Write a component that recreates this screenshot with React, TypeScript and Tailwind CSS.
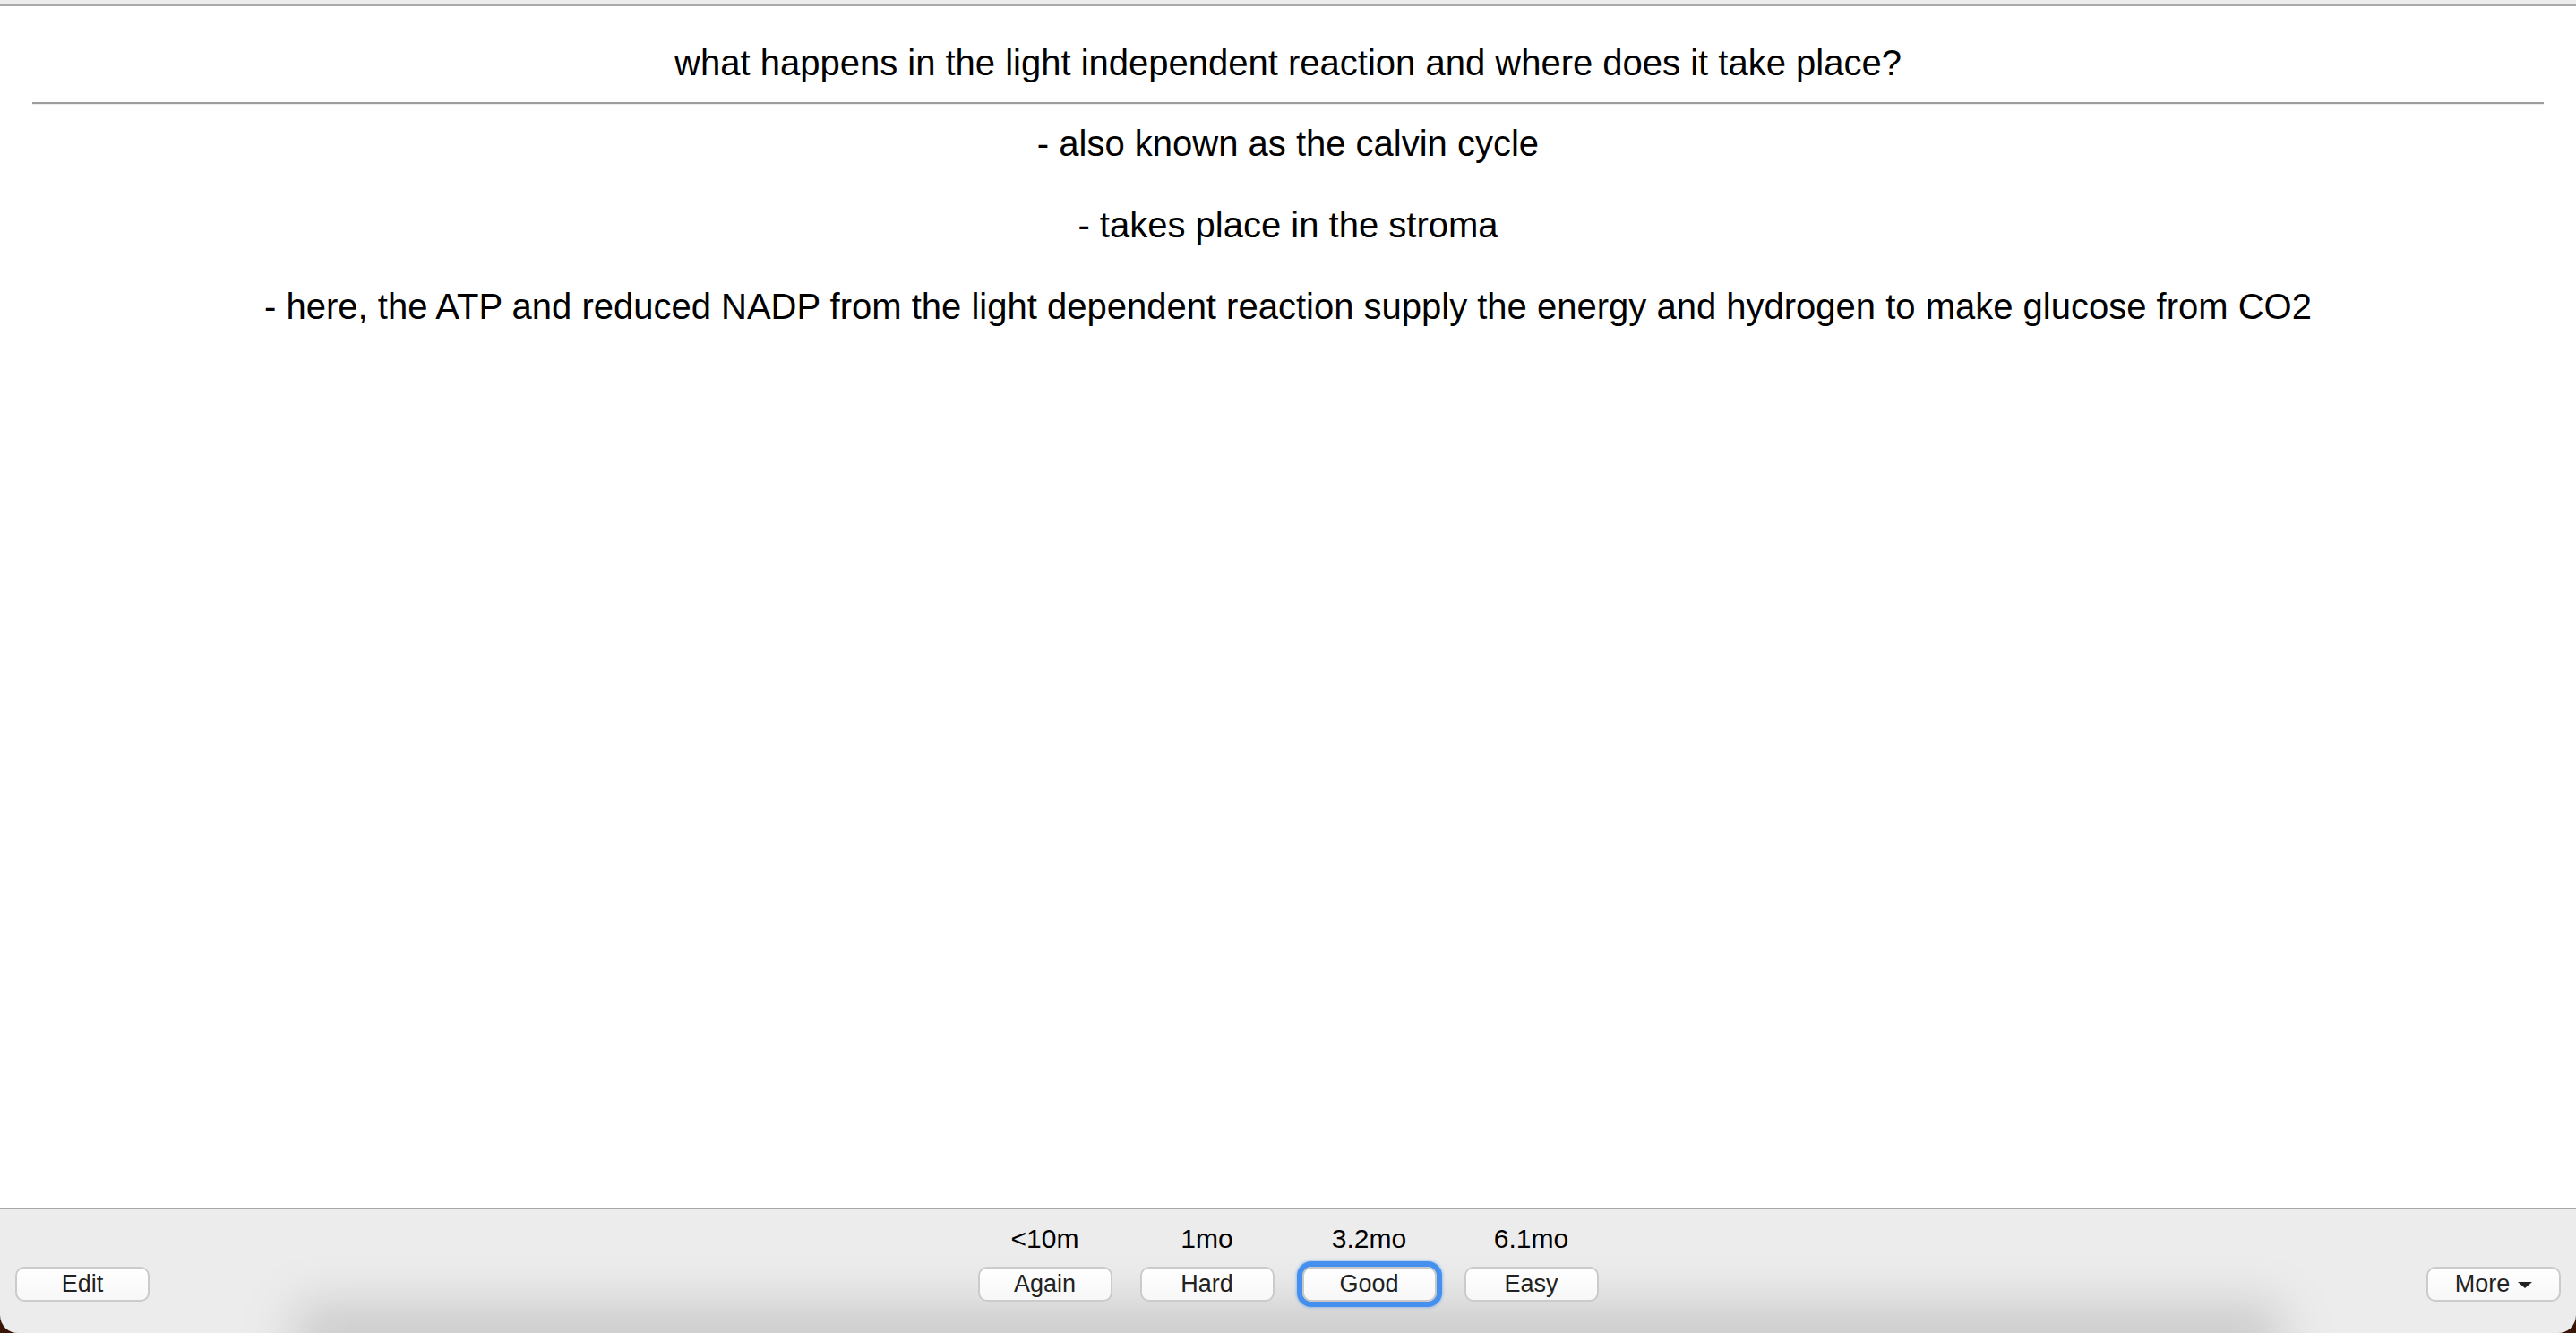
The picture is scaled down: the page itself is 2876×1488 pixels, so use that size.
import type { ReactNode } from 'react';

const font = { fontFamily: '"Liberation Sans", Arial, Helvetica, sans-serif' };

const intervals = [
  { label: '<10m', text: 'Again' },
  { label: '1mo', text: 'Hard' },
  { label: '3.2mo', text: 'Good', focused: true },
  { label: '6.1mo', text: 'Easy' },
];

function BarButton({ children, focused = false }: { children: ReactNode; focused?: boolean }) {
  return (
    <button
      type="button"
      className={
        focused
          ? 'flex h-[39px] w-[150px] items-center justify-center rounded-[10px] border-2 border-[#c8c8c8] bg-gradient-to-b from-white to-[#f7f7f7] text-[27px] text-[#222] shadow-[0_0_0_6px_#4590ee,0_0_3px_7px_rgba(69,144,238,0.45)]'
          : 'flex h-[39px] w-[150px] items-center justify-center rounded-[10px] border-2 border-[#cbcbcb] bg-gradient-to-b from-white to-[#f7f7f7] text-[27px] text-[#222]'
      }
    >
      {children}
    </button>
  );
}

export default function App() {
  return (
    <div className="flex h-[1488px] w-full flex-col overflow-hidden bg-[#3a1508]" style={font}>
      <div className="h-[5px] bg-[#ececec]" />
      <div className="h-[2px] bg-[#a9a9a9]" />

      <main className="flex flex-1 flex-col bg-white px-[36px] pt-[40px] text-[40px] leading-[46px] text-black">
        <div className="text-center">what happens in the light independent reaction and where does it take place?</div>
        <hr className="mt-[21px] border-t-[2px] border-b border-t-[#9c9c9c] border-b-[#ececec]" />
        <div className="mt-[20px] flex flex-col gap-[45px] text-center">
          <div>- also known as the calvin cycle</div>
          <div>- takes place in the stroma</div>
          <div>
            - here, the ATP and reduced NADP from the light dependent reaction supply the energy and hydrogen to make
            glucose from CO2
          </div>
        </div>
      </main>

      <footer className="relative flex h-[140px] items-end overflow-hidden rounded-b-[20px] border-t-2 border-[#a8a8a8] bg-[#ececec] px-[17px] pb-[35px]">
        <div className="pointer-events-none absolute bottom-[-40px] left-[330px] right-[330px] h-[70px] bg-black/15 blur-[28px]" />

        <div className="relative flex flex-1">
          <BarButton>Edit</BarButton>
        </div>

        <div className="relative flex gap-[31px]">
          {intervals.map(item => (
            <div key={item.text} className="flex flex-col items-center gap-[14px]">
              <span className="text-[30px] leading-[34px] text-black">{item.label}</span>
              <BarButton focused={item.focused}>{item.text}</BarButton>
            </div>
          ))}
        </div>

        <div className="relative flex flex-1 justify-end">
          <BarButton>
            <span className="flex items-center gap-[9px]">
              More
              <svg width="16" height="8" viewBox="0 0 16 8" className="mt-[3px]">
                <polygon points="0,0 16,0 8,7" fill="#222" />
              </svg>
            </span>
          </BarButton>
        </div>
      </footer>
    </div>
  );
}
